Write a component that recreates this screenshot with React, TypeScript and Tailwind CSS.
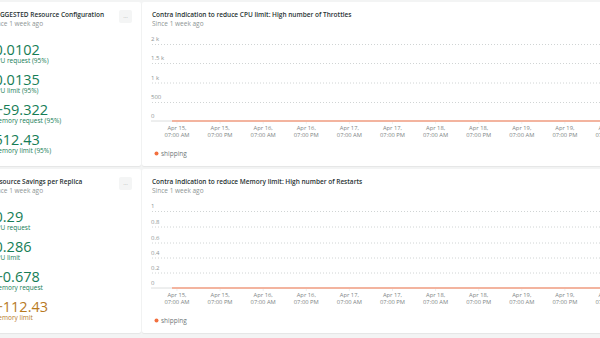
import React from "react";

const FONT = { fontFamily: '"Open Sans", "Liberation Sans", sans-serif' };

const ticks = [
  ["Apr 15,", "07:00 AM"],
  ["Apr 15,", "07:00 PM"],
  ["Apr 16,", "07:00 AM"],
  ["Apr 16,", "07:00 PM"],
  ["Apr 17,", "07:00 AM"],
  ["Apr 17,", "07:00 PM"],
  ["Apr 18,", "07:00 AM"],
  ["Apr 18,", "07:00 PM"],
  ["Apr 19,", "07:00 AM"],
  ["Apr 19,", "07:00 PM"],
  ["Apr 20,", "07:00 AM"],
];

type Y = { label: string; y: number; grid: boolean };

function Chart({ ys }: { ys: Y[] }) {
  const zero = 93;
  return (
    <svg width={478} height={138} className="block" style={FONT}>
      {ys.map((t, i) => (
        <g key={i}>
          <text x={9} y={t.y} fontSize={6} fill="#8e9595">
            {t.label}
          </text>
          {t.grid && (
            <line
              x1={10}
              x2={478}
              y1={t.y + 3.5}
              y2={t.y + 3.5}
              stroke="#c4c9c9"
              strokeWidth={0.8}
              strokeDasharray="1 2"
            />
          )}
        </g>
      ))}
      <line x1={9} x2={478} y1={zero} y2={zero} stroke="#d3d6d6" strokeWidth={0.8} />
      <line x1={30} x2={478} y1={zero} y2={zero} stroke="#f5a084" strokeWidth={1.3} />
      {ticks.map((t, i) => {
        const x = 35 + i * 43.1;
        return (
          <g key={i}>
            <line x1={x} x2={x} y1={zero + 1} y2={zero + 3} stroke="#e3e5e5" strokeWidth={0.6} />
            <text x={x} y={102} fontSize={5.8} fill="#7d8585" textAnchor="middle">
              {t[0]}
            </text>
            <text x={x} y={108.5} fontSize={5.8} fill="#7d8585" textAnchor="middle">
              {t[1]}
            </text>
          </g>
        );
      })}
      <circle cx={14.5} cy={125.5} r={2} fill="#f26f3e" />
      <text x={19} y={128} fontSize={6.5} fill="#6f7878">
        shipping
      </text>
    </svg>
  );
}

function Metric({ value, label, color }: { value: string; label: string; color: string }) {
  return (
    <div className="flex flex-col mb-[7px]" style={{ color }}>
      <div className="text-[14.5px] leading-[15px] whitespace-nowrap ml-[3px]">{value}</div>
      <div className="text-[6.5px] leading-[8px] whitespace-nowrap ml-[1px]">{label}</div>
    </div>
  );
}

function LeftCard({
  title,
  metrics,
}: {
  title: string;
  metrics: { value: string; label: string; color: string }[];
}) {
  return (
    <div className="w-[157px] -ml-[16px] shrink-0 bg-white rounded-[2px] shadow-[0_1px_1px_rgba(0,0,0,0.06)] pl-[7.5px] pr-[9px] pt-[8px]">
      <div className="flex items-start">
        <div className="flex-1 min-w-0">
          <div className="text-[6.5px] leading-[9px] font-semibold text-[#293333] whitespace-nowrap">{title}</div>
          <div className="text-[6.5px] leading-[9px] text-[#8e9595] whitespace-nowrap">Since 1 week ago</div>
        </div>
        <div className="w-[13px] h-[13px] rounded-[2px] bg-[#f4f5f5] flex items-center justify-center text-[6px] leading-[6px] text-[#9aa0a0]">
          ···
        </div>
      </div>
      <div className="mt-[13.5px]">
        {metrics.map((m, i) => (
          <Metric key={i} {...m} />
        ))}
      </div>
    </div>
  );
}

function RightCard({ title, ys }: { title: string; ys: Y[] }) {
  return (
    <div className="w-[478px] shrink-0 bg-white rounded-[2px] shadow-[0_1px_1px_rgba(0,0,0,0.06)] pt-[8px] overflow-hidden">
      <div className="pl-[10px]">
        <div className="text-[6.5px] leading-[9px] font-semibold text-[#293333] whitespace-nowrap">{title}</div>
        <div className="text-[6.5px] leading-[9px] text-[#8e9595] whitespace-nowrap">Since 1 week ago</div>
      </div>
      <Chart ys={ys} />
    </div>
  );
}

const G = "#167d56";
const O = "#b87a1f";

export default function App() {
  return (
    <div
      className="w-[600px] h-[338px] overflow-hidden bg-[#f3f4f4] pt-[2px] flex flex-col gap-[3px]"
      style={FONT}
    >
      <div className="flex gap-[1px] h-[164px] shrink-0">
        <LeftCard
          title="SUGGESTED Resource Configuration"
          metrics={[
            { value: "0.0102", label: "CPU request (95%)", color: G },
            { value: "0.0135", label: "CPU limit (95%)", color: G },
            { value: "\u221259.322", label: "Memory request (95%)", color: G },
            { value: "512.43", label: "Memory limit (95%)", color: G },
          ]}
        />
        <RightCard
          title="Contra Indication to reduce CPU limit: High number of Throttles"
          ys={[
            { label: "2 k", y: 13, grid: true },
            { label: "1.5 k", y: 32, grid: true },
            { label: "1 k", y: 51.5, grid: true },
            { label: "500", y: 71, grid: true },
            { label: "0", y: 90, grid: false },
          ]}
        />
      </div>
      <div className="flex gap-[1px] h-[164px] shrink-0">
        <LeftCard
          title="Resource Savings per Replica"
          metrics={[
            { value: "0.29", label: "CPU request", color: G },
            { value: "0.286", label: "CPU limit", color: G },
            { value: "\u22120.678", label: "Memory request", color: G },
            { value: "\u2212112.43", label: "Memory limit", color: O },
          ]}
        />
        <RightCard
          title="Contra Indication to reduce Memory limit: High number of Restarts"
          ys={[
            { label: "1", y: 13, grid: true },
            { label: "0.8", y: 28.5, grid: true },
            { label: "0.6", y: 44.5, grid: true },
            { label: "0.4", y: 59.5, grid: true },
            { label: "0.2", y: 74.5, grid: true },
            { label: "0", y: 90, grid: false },
          ]}
        />
      </div>
    </div>
  );
}
